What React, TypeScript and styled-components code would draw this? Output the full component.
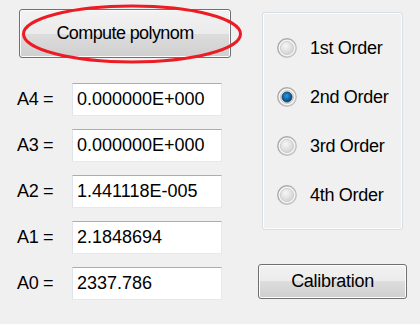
import React, { useState } from "react";
import styled, { createGlobalStyle } from "styled-components";

const Global = createGlobalStyle`
  html, body { margin: 0; padding: 0; background: #f0f0f0; }
  body { font-family: "Liberation Sans", Arial, sans-serif; color: #000; }
`;

const Page = styled.div`
  width: 420px;
  height: 324px;
  display: flex;
  background: #f0f0f0;
  overflow: hidden;
`;

const LeftCol = styled.div`
  width: 250px;
  padding: 9px 0 0 17px;
  box-sizing: border-box;
  display: flex;
  flex-direction: column;
`;

const RightCol = styled.div`
  display: flex;
  flex-direction: column;
  padding-top: 12px;
`;

const ButtonWrap = styled.div`
  position: relative;
  margin-left: 2px;
  width: 212px;
`;

const WinButton = styled.button<{ $w: number; $h: number; $ls: number }>`
  width: ${(p) => p.$w}px;
  height: ${(p) => p.$h}px;
  box-sizing: border-box;
  border: 1px solid #707070;
  border-radius: 3px;
  background: linear-gradient(#f2f2f2 0%, #ebebeb 50%, #dddddd 50%, #cfcfcf 100%);
  box-shadow: inset 0 0 0 1px #fcfcfc;
  font-family: "Liberation Sans", Arial, sans-serif;
  font-size: 18px;
  letter-spacing: ${(p) => p.$ls}px;
  color: #000;
  padding: 0;
  display: flex;
  align-items: center;
  justify-content: center;
`;

const Ellipse = styled.svg`
  position: absolute;
  left: 3px;
  top: -5px;
  width: 220px;
  height: 60px;
  overflow: visible;
  pointer-events: none;
`;

const Fields = styled.div`
  margin-top: 25px;
  display: flex;
  flex-direction: column;
  gap: 14px;
`;

const Row = styled.div`
  display: flex;
  align-items: center;
  height: 32px;
`;

const Label = styled.span`
  width: 55px;
  font-size: 18px;
  letter-spacing: -0.3px;
`;

const TextBox = styled.div`
  width: 150px;
  height: 33px;
  box-sizing: border-box;
  background: #fff;
  border: 1px solid #e3e9ef;
  border-top-color: #abadb3;
  border-left-color: #e2e3ea;
  padding: 0 0 0 4px;
  display: flex;
  align-items: center;
  font-size: 18px;
`;

const Group = styled.div`
  margin-left: 12px;
  width: 141px;
  height: 218px;
  box-sizing: border-box;
  border: 1px solid #d5dfe5;
  border-radius: 3px;
  box-shadow: inset 0 0 0 1px #fdfdfd;
  padding: 25px 0 0 14px;
  display: flex;
  flex-direction: column;
  gap: 29px;
`;

const RadioRow = styled.div`
  display: flex;
  align-items: center;
  height: 20px;
  gap: 13px;
  font-size: 18px;
  letter-spacing: -0.3px;
`;

const CalWrap = styled.div`
  margin: 34px 0 0 8px;
`;

function RadioGlyph({ checked }: { checked: boolean }) {
  return (
    <svg width="20" height="20" viewBox="0 0 20 20">
      <defs>
        <linearGradient id="ring" x1="0" y1="0" x2="1" y2="1">
          <stop offset="0" stopColor="#a0a0a0" />
          <stop offset="1" stopColor="#c8c8c8" />
        </linearGradient>
        <radialGradient id="inner" cx="0.4" cy="0.35" r="0.7">
          <stop offset="0" stopColor="#f6f6f6" />
          <stop offset="1" stopColor="#d0d0d0" />
        </radialGradient>
        <radialGradient id="dot" cx="0.45" cy="0.4" r="0.6">
          <stop offset="0" stopColor="#2a9be0" />
          <stop offset="0.7" stopColor="#0b5d9c" />
          <stop offset="1" stopColor="#0a3e6e" />
        </radialGradient>
      </defs>
      <circle cx="10" cy="10" r="9.2" fill="#f4f4f4" stroke="url(#ring)" strokeWidth="1.4" />
      <circle cx="10" cy="10" r="6.6" fill="url(#inner)" stroke="#c9c9c9" strokeWidth="0.8" />
      {checked && <circle cx="10" cy="10" r="5" fill="url(#dot)" stroke="#1d3f5e" strokeWidth="0.8" />}
    </svg>
  );
}

const coeffs = [
  ["A4 =", "0.000000E+000"],
  ["A3 =", "0.000000E+000"],
  ["A2 =", "1.441118E-005"],
  ["A1 =", "2.1848694"],
  ["A0 =", "2337.786"],
];

const orders = ["1st Order", "2nd Order", "3rd Order", "4th Order"];

export default function App() {
  const [sel] = useState(1);
  return (
    <Page>
      <Global />
      <LeftCol>
        <ButtonWrap>
          <WinButton $w={212} $h={49} $ls={-0.6}>Compute polynom</WinButton>
          <Ellipse viewBox="0 0 220 60">
            <ellipse cx="110" cy="30" rx="108.5" ry="28" fill="none" stroke="#ec1c24" strokeWidth="3" />
          </Ellipse>
        </ButtonWrap>
        <Fields>
          {coeffs.map(([l, v]) => (
            <Row key={l}>
              <Label>{l}</Label>
              <TextBox>{v}</TextBox>
            </Row>
          ))}
        </Fields>
      </LeftCol>
      <RightCol>
        <Group>
          {orders.map((o, i) => (
            <RadioRow key={o}>
              <RadioGlyph checked={i === sel} />
              <span>{o}</span>
            </RadioRow>
          ))}
        </Group>
        <CalWrap>
          <WinButton $w={149} $h={35} $ls={-0.3}>Calibration</WinButton>
        </CalWrap>
      </RightCol>
    </Page>
  );
}
